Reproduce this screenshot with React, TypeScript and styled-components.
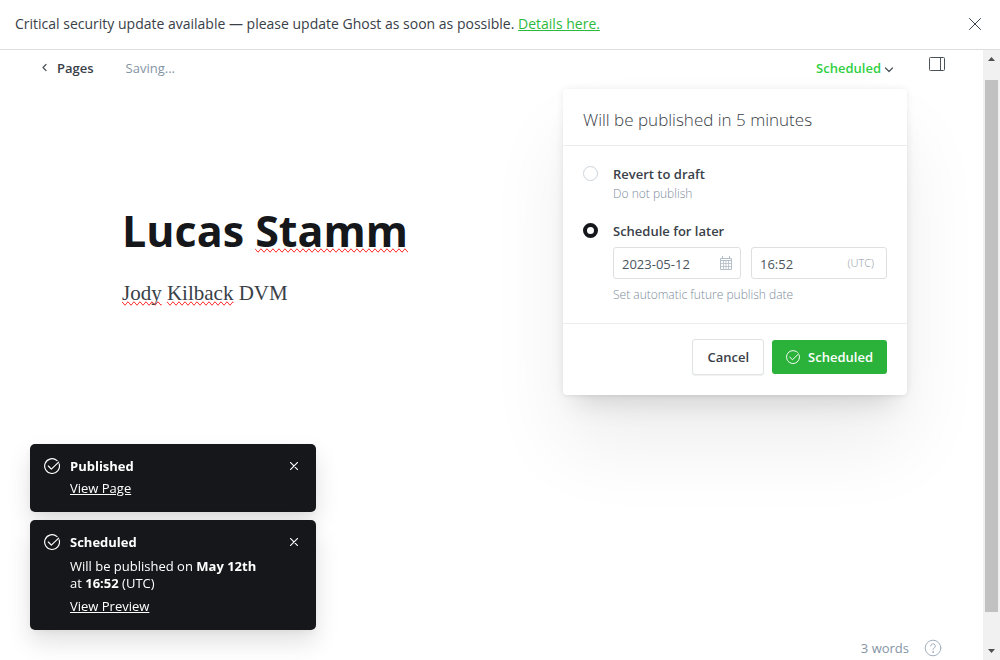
import React, { useState } from "react";
import styled, { createGlobalStyle, css } from "styled-components";

const GlobalStyle = createGlobalStyle`
  * { box-sizing: border-box; }
  body {
    margin: 0;
    background: #fff;
    color: #394047;
    font-family: "Open Sans", "Noto Sans", sans-serif;
    font-size: 13px;
    line-height: 20px;
  }
  button, input { font: inherit; color: inherit; }
  button { cursor: pointer; }
  h1, h2, p { margin: 0; }
`;

const Shell = styled.div`
  display: flex;
  flex-direction: column;
  height: 100vh;
`;

const Banner = styled.aside`
  display: flex;
  align-items: center;
  justify-content: space-between;
  flex: none;
  height: 50px;
  padding: 0 19px 2px 15px;
  border-bottom: 1px solid #dddedf;
  font-size: 14px;
`;

const GreenLink = styled.a`
  color: #2bba3c;
  text-decoration: underline;
`;

const IconButton = styled.button`
  display: flex;
  padding: 0;
  border: 0;
  background: none;
  color: #394047;
`;

const Body = styled.div`
  display: flex;
  flex: 1;
  min-height: 0;
`;

const Editor = styled.main`
  position: relative;
  display: flex;
  flex-direction: column;
  flex: 1;
  min-width: 0;
`;

const TopBar = styled.header`
  display: flex;
  align-items: center;
  height: 35px;
  padding: 7px 38px 6px 40px;
`;

const BackLink = styled.a`
  display: flex;
  align-items: center;
  gap: 7px;
  margin-right: 32px;
  color: #394047;
  font-weight: 600;
  text-decoration: none;
`;

const Muted = styled.span`
  color: #8494a4;
`;

const Publish = styled.div`
  position: relative;
  margin-left: auto;
  margin-right: 35px;
`;

const PublishTrigger = styled.button`
  display: flex;
  align-items: center;
  gap: 3px;
  padding: 0;
  border: 0;
  background: none;
  color: #30cf43;
  font-weight: 600;
`;

const PanelButton = styled(IconButton)`
  align-self: flex-start;
`;

const Popover = styled.form`
  position: absolute;
  z-index: 2;
  top: 31px;
  right: -13px;
  width: 344px;
  border-radius: 4px;
  background: #fff;
  box-shadow: 0 0 7px rgba(0, 0, 0, 0.08), 0 2px 2px rgba(0, 0, 0, 0.02),
    0 20px 25px -12px rgba(0, 0, 0, 0.12), 0 50px 80px rgba(0, 0, 0, 0.07);
`;

const PopoverTitle = styled.h2`
  padding: 21px 20px 15px;
  border-bottom: 1px solid #ebeced;
  font-size: 17px;
  font-weight: 300;
  line-height: 20px;
  color: #394047;
`;

const Options = styled.div`
  display: flex;
  flex-direction: column;
  gap: 17px;
  padding: 18px 20px;
  border-bottom: 1px solid #ebeced;
`;

const Option = styled.div`
  display: grid;
  grid-template-columns: 15px minmax(0, 1fr);
  column-gap: 15px;
`;

const Radio = styled.input`
  appearance: none;
  width: 15px;
  height: 15px;
  margin: 2px 0 0;
  border: 1px solid #ccd3d9;
  border-radius: 50%;
  background: #fff;
  &:checked {
    border: 4px solid #15171a;
  }
`;

const OptionLabel = styled.label`
  font-weight: 600;
`;

const Hint = styled.p`
  grid-column: 2;
  color: #7c8b9a;
  font-size: 12px;
  font-weight: 300;
`;

const Fields = styled.div`
  grid-column: 2;
  display: grid;
  grid-template-columns: 128px minmax(0, 1fr);
  gap: 10px;
  margin: 6px 0;
`;

const Field = styled.label`
  display: flex;
  align-items: center;
  height: 32px;
  padding: 0 8px;
  border: 1px solid #dddfe1;
  border-radius: 3px;
  color: #b4bec8;
`;

const FieldInput = styled.input`
  flex: 1;
  min-width: 0;
  padding: 2px 0 0;
  border: 0;
  outline: 0;
  background: none;
  color: #4b5560;
  font-size: 13px;
`;

const Zone = styled.span`
  padding-right: 4px;
  color: #8e9aa6;
  font-size: 11px;
  font-weight: 300;
`;

const Actions = styled.div`
  display: flex;
  align-items: flex-start;
  justify-content: flex-end;
  gap: 8px;
  padding: 15px 20px 20px;
`;

const ActionButton = styled.button<{ $primary?: boolean }>`
  display: flex;
  align-items: center;
  gap: 8px;
  height: 36px;
  padding: 0 14px;
  border: 1px solid #dfe3e6;
  border-radius: 3px;
  background: #fff;
  font-weight: 600;
  box-shadow: 0 1px 1px rgba(0, 0, 0, 0.06);
  ${(p) =>
    p.$primary &&
    css`
      height: 34px;
      margin-top: 1px;
      border: 0;
      background: #2ab23a;
      color: #fff;
      box-shadow: none;
    `}
`;

const Document = styled.article`
  flex: 1;
  padding: 118px 122px 0;
`;

const Title = styled.h1`
  color: #15171a;
  font-size: 43px;
  line-height: 56px;
  font-weight: 700;
`;

const Paragraph = styled.p`
  margin-top: 18px;
  font-family: "Liberation Serif", serif;
  font-size: 21px;
  line-height: 32px;
`;

const Misspelled = styled.span`
  text-decoration-line: spelling-error;
`;

const StatusBar = styled.footer`
  display: flex;
  align-items: center;
  justify-content: flex-end;
  gap: 15px;
  padding: 0 41px 2px;
  color: #8494a4;
`;

const Toasts = styled.div`
  position: fixed;
  left: 30px;
  bottom: 30px;
  z-index: 3;
  display: flex;
  flex-direction: column;
  gap: 8px;
  width: 286px;
`;

const ToastCard = styled.section`
  display: flex;
  align-items: flex-start;
  padding: 12px 18px 15px 14px;
  border-radius: 5px;
  background: #15171a;
  color: #fff;
  box-shadow: 0 2px 8px rgba(0, 0, 0, 0.05), 0 12px 24px rgba(0, 0, 0, 0.12);
  > svg { margin-top: 2px; }
`;

const ToastBody = styled.div`
  display: flex;
  flex: 1;
  flex-direction: column;
  align-items: flex-start;
  gap: 4px;
  padding-left: 10px;
  line-height: 17px;
`;

const ToastTitle = styled.strong`
  line-height: 20px;
`;

const ToastText = styled.p`
  && { margin: 2px 0; }
`;

const ToastLink = styled.a`
  color: #fff;
`;

const CloseToast = styled(IconButton)`
  margin-top: 6px;
  color: #fff;
`;

const ScrollTrack = styled.div`
  display: flex;
  flex: none;
  flex-direction: column;
  align-items: center;
  width: 17px;
  padding: 6px 0;
  background: #f1f1f1;
  color: #505050;
`;

const ScrollThumb = styled.div`
  flex: none;
  width: 13px;
  height: 89%;
  margin: 18px 0 auto;
  background: #c1c1c1;
`;

const Cross = ({ size, stroke = 1 }: { size: number; stroke?: number }) => (
  <svg width={size} height={size} viewBox="0 0 12 12" fill="none" stroke="currentColor" strokeWidth={stroke} strokeLinecap="round" aria-hidden>
    <path d="M.5.5l11 11M11.5.5l-11 11" />
  </svg>
);

const CheckCircle = ({ size }: { size: number }) => (
  <svg width={size} height={size} viewBox="0 0 24 24" fill="none" stroke="currentColor" strokeWidth="1.7" strokeLinecap="round" strokeLinejoin="round" aria-hidden>
    <path d="M22.700 8.800A11.100 11.100 0 1 1 19.600 3.900" />
    <path d="M6.500 12l4.500 4.800L22 6.200" />
  </svg>
);

const Chevron = ({ down }: { down?: boolean }) => (
  <svg width="10" height="10" viewBox="0 0 10 10" fill="none" stroke="#4b5359" strokeWidth="1.2" strokeLinecap="round" strokeLinejoin="round" aria-hidden>
    <path d={down ? "M1.5 5L5 8.500l3.500-3.500" : "M6 1.500L3 4.500l3 3"} />
  </svg>
);

const Calendar = () => (
  <svg width="12" height="14" viewBox="0 0 12 14" fill="none" stroke="currentColor" aria-hidden>
    <path d="M.5 2.500h11v11H.5zM2.500 0v3M9.500 0v3" />
    <path d="M.5 4.500h11" />
    <path d="M.5 7.500h11M.5 10.500h11M3.500 5v8M6 5v8M8.500 5v8" strokeWidth=".8" />
  </svg>
);

const Toast = ({ title, link, children }: { title: string; link: string; children?: React.ReactNode }) => {
  const [open, setOpen] = useState(true);
  if (!open) return null;
  return (
    <ToastCard role="status">
      <CheckCircle size={16} />
      <ToastBody>
        <ToastTitle>{title}</ToastTitle>
        {children}
        <ToastLink href="#view">{link}</ToastLink>
      </ToastBody>
      <CloseToast type="button" aria-label="Close" onClick={() => setOpen(false)}>
        <Cross size={8} stroke={1.7} />
      </CloseToast>
    </ToastCard>
  );
};

export default function App() {
  const [mode, setMode] = useState("schedule");
  return (
    <>
      <GlobalStyle />
      <Shell>
        <Banner>
          <p>
            Critical security update available — please update Ghost as soon as possible.{" "}
            <GreenLink href="#details">Details here.</GreenLink>
          </p>
          <IconButton type="button" aria-label="Dismiss">
            <Cross size={12} />
          </IconButton>
        </Banner>
        <Body>
          <Editor>
            <TopBar>
              <BackLink href="#pages">
                <Chevron />
                Pages
              </BackLink>
              <Muted>Saving...</Muted>
              <Publish>
                <PublishTrigger type="button">
                  Scheduled
                  <Chevron down />
                </PublishTrigger>
                <Popover onSubmit={(e) => e.preventDefault()}>
                  <PopoverTitle>Will be published in 5 minutes</PopoverTitle>
                  <Options>
                    <Option>
                      <Radio type="radio" id="draft" name="mode" checked={mode === "draft"} onChange={() => setMode("draft")} />
                      <OptionLabel htmlFor="draft">Revert to draft</OptionLabel>
                      <Hint>Do not publish</Hint>
                    </Option>
                    <Option>
                      <Radio type="radio" id="schedule" name="mode" checked={mode === "schedule"} onChange={() => setMode("schedule")} />
                      <OptionLabel htmlFor="schedule">Schedule for later</OptionLabel>
                      <Fields>
                        <Field>
                          <FieldInput aria-label="Date" defaultValue="2023-05-12" />
                          <Calendar />
                        </Field>
                        <Field>
                          <FieldInput aria-label="Time" defaultValue="16:52" />
                          <Zone>(UTC)</Zone>
                        </Field>
                      </Fields>
                      <Hint>Set automatic future publish date</Hint>
                    </Option>
                  </Options>
                  <Actions>
                    <ActionButton type="button">Cancel</ActionButton>
                    <ActionButton type="submit" $primary>
                      <CheckCircle size={14} />
                      Scheduled
                    </ActionButton>
                  </Actions>
                </Popover>
              </Publish>
              <PanelButton type="button" aria-label="Settings">
                <svg width="16" height="14" viewBox="0 0 16 14" fill="none" stroke="#4b5359" aria-hidden>
                  <rect x=".5" y=".5" width="15" height="13" rx="1" />
                  <path d="M11.500.500v13" />
                </svg>
              </PanelButton>
            </TopBar>
            <Document>
              <Title>
                Lucas <Misspelled>Stamm</Misspelled>
              </Title>
              <Paragraph>
                <Misspelled>Jody</Misspelled> <Misspelled>Kilback</Misspelled> DVM
              </Paragraph>
            </Document>
            <StatusBar>
              <span>3 words</span>
              <IconButton type="button" aria-label="Help">
                <svg width="18" height="18" viewBox="0 0 18 18" fill="none" stroke="#a3b0be" strokeLinecap="round" aria-hidden>
                  <circle cx="9" cy="9" r="7.800" />
                  <path d="M6.700 7a2.300 2.300 0 1 1 3.300 2.100c-.7.350-1 .7-1 1.400v.3" />
                  <circle cx="9" cy="13" r=".4" fill="#a3b0be" />
                </svg>
              </IconButton>
            </StatusBar>
          </Editor>
          <ScrollTrack aria-hidden>
            <svg width="7" height="6" viewBox="0 0 7 6" fill="currentColor"><path d="M0 5l3.500-4L7 5z" /></svg>
            <ScrollThumb />
            <svg width="7" height="6" viewBox="0 0 7 6" fill="currentColor"><path d="M0 1l3.500 4L7 1z" /></svg>
          </ScrollTrack>
        </Body>
      </Shell>
      <Toasts>
        <Toast title="Published" link="View Page" />
        <Toast title="Scheduled" link="View Preview">
          <ToastText>
            Will be published on <b>May 12th</b>
            <br />
            at <b>16:52</b> (UTC)
          </ToastText>
        </Toast>
      </Toasts>
    </>
  );
}
